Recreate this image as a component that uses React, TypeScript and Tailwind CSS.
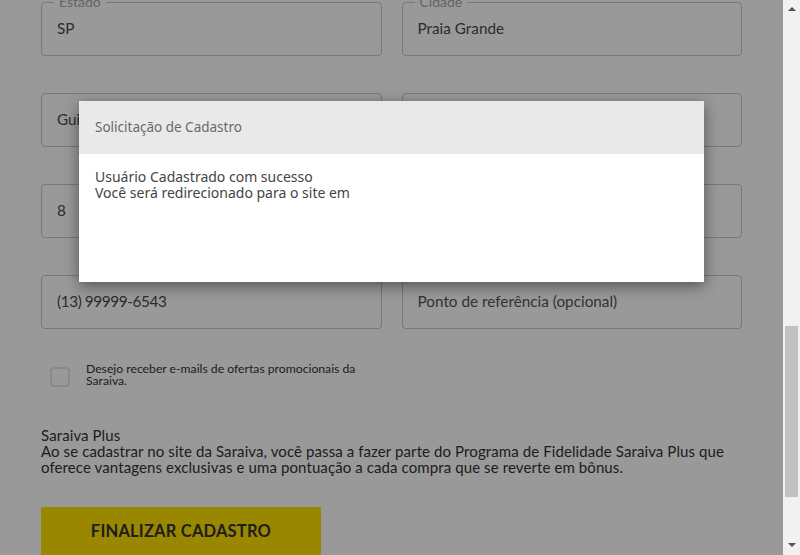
import React from "react";

const lato = { fontFamily: '"Lato", "Liberation Sans", sans-serif' };
const noto = { fontFamily: '"Noto Sans", "Open Sans", sans-serif' };

function Field({
  value,
  label,
  placeholder,
  tight,
}: {
  value?: string;
  label?: string;
  placeholder?: string;
  tight?: boolean;
}) {
  return (
    <div className="relative h-[54px] rounded-[4px] border border-[#c9c9c9] px-[15px] flex items-center pb-[2px]">
      {label && (
        <span className="absolute left-[12px] top-[-9px] bg-white px-[5px] text-[14px] leading-[16px] text-[#a8a8a8]">
          {label}
        </span>
      )}
      {value ? (
        <span className={`text-[15.3px] text-[#4a4a4a] whitespace-nowrap ${tight ? "tracking-[-0.4px]" : ""}`}>
          {value}
        </span>
      ) : (
        <span className="text-[15.3px] text-[#555] whitespace-nowrap">{placeholder}</span>
      )}
    </div>
  );
}

export default function App() {
  return (
    <div className="flex h-[555px] w-[800px] overflow-hidden bg-white">
      <div className="relative w-[783px] h-full bg-white" style={lato}>
        <div className="px-[41px] pt-[2px]">
          <div className="grid grid-cols-2 gap-x-[20px] gap-y-[37px]">
            <Field label="Estado" value="SP" />
            <Field label="Cidade" value="Praia Grande" />
            <Field value="Guilhermina" />
            <Field value="Rua das Flores" />
            <Field value="8" />
            <Field placeholder="Complemento (opcional)" />
            <Field value="(13) 99999-6543" tight />
            <Field placeholder="Ponto de referência (opcional)" />
          </div>

          <div className="mt-[34px] flex items-start">
            <div className="ml-[9px] mt-[4px] h-[20px] w-[20px] shrink-0 rounded-[4px] border-2 border-[#e6e6e6]" />
            <p className="ml-[16px] text-[12.2px] leading-[12px] text-[#333]">
              Desejo receber e-mails de ofertas promocionais da
              <br />
              Saraiva.
            </p>
          </div>

          <div className="mt-[40px] text-[15px] leading-[16px] tracking-[0.1px] text-[#333]">
            <p>Saraiva Plus</p>
            <p>
              Ao se cadastrar no site da Saraiva, você passa a fazer parte do Programa de Fidelidade Saraiva Plus que oferece vantagens exclusivas e uma pontuação a cada compra que se reverte em bônus.
            </p>
          </div>

          <button className="mt-[32px] flex h-[48px] w-[280px] items-center justify-center bg-[#ffe100] text-[16.5px] font-bold text-[#333] tracking-[0.2px]">
            FINALIZAR CADASTRO
          </button>
        </div>

        <div className="absolute inset-0 bg-black/40" />

        <div
          className="absolute left-[79px] top-[101px] w-[625px] bg-white shadow-[0_4px_14px_rgba(0,0,0,0.45)]"
          style={noto}
        >
          <div className="flex h-[53px] items-center bg-[#e9e9e9] px-[16px]">
            <span className="text-[13.5px] text-[#6a6a6a]">Solicitação de Cadastro</span>
          </div>
          <div className="h-[128px] px-[16px] pt-[15px] text-[14px] leading-[16px] text-[#444]">
            <p>Usuário Cadastrado com sucesso</p>
            <p>Você será redirecionado para o site em</p>
          </div>
        </div>
      </div>

      <div className="relative flex h-full w-[17px] flex-col bg-[#f1f1f1]">
        <div className="flex h-[17px] items-center justify-center">
          <svg width="8" height="5" viewBox="0 0 8 5" className="mt-[1px]">
            <polygon points="4,0 8,4 0,4" fill="#505050" />
          </svg>
        </div>
        <div className="absolute left-[2px] top-[326px] h-[171px] w-[13px] bg-[#c1c1c1]" />
        <div className="mt-auto flex h-[17px] items-center justify-center">
          <svg width="8" height="5" viewBox="0 0 8 5" className="mb-[2px]">
            <polygon points="0,0 8,0 4,4" fill="#505050" />
          </svg>
        </div>
      </div>
    </div>
  );
}
